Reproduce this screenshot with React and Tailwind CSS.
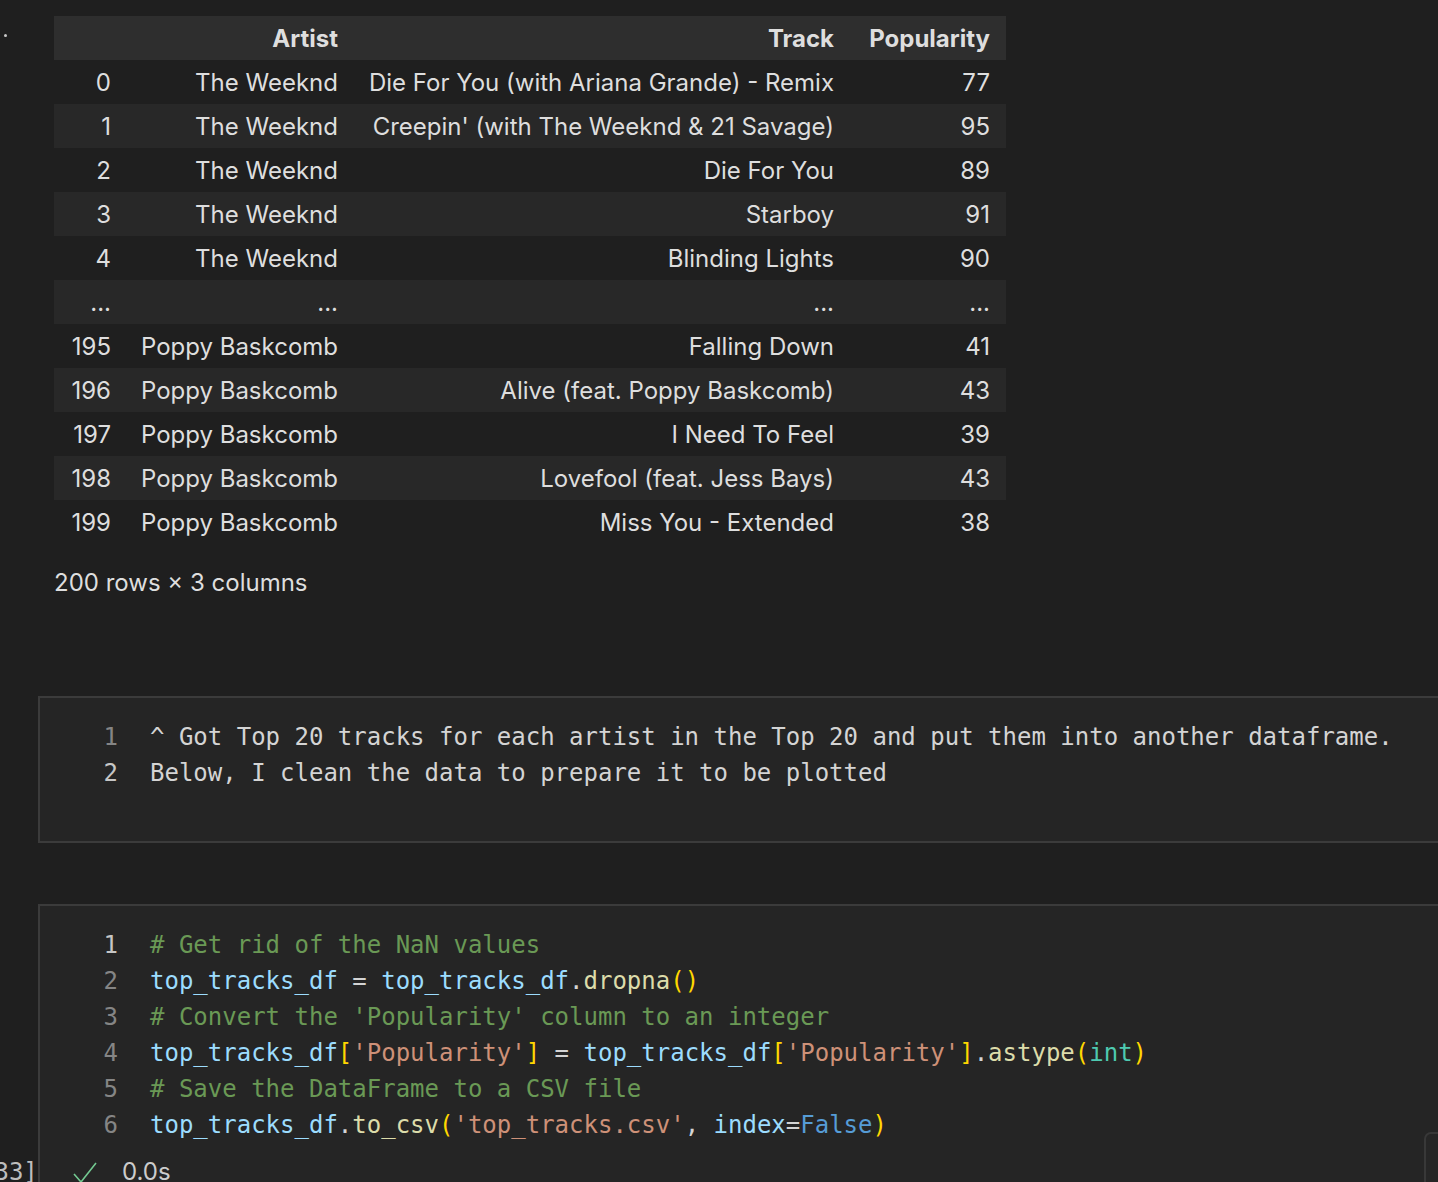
import React from "react";

const rows = [
  ["0", "The Weeknd", "Die For You (with Ariana Grande) - Remix", "77"],
  ["1", "The Weeknd", "Creepin' (with The Weeknd & 21 Savage)", "95"],
  ["2", "The Weeknd", "Die For You", "89"],
  ["3", "The Weeknd", "Starboy", "91"],
  ["4", "The Weeknd", "Blinding Lights", "90"],
  ["...", "...", "...", "..."],
  ["195", "Poppy Baskcomb", "Falling Down", "41"],
  ["196", "Poppy Baskcomb", "Alive (feat. Poppy Baskcomb)", "43"],
  ["197", "Poppy Baskcomb", "I Need To Feel", "39"],
  ["198", "Poppy Baskcomb", "Lovefool (feat. Jess Bays)", "43"],
  ["199", "Poppy Baskcomb", "Miss You - Extended", "38"],
];

const V = "text-[#9cdcfe]";
const F = "text-[#dcdcaa]";
const S = "text-[#ce9178]";
const B = "text-[#ffd700]";
const C = "text-[#6a9955]";
const P = "text-[#d4d4d4]";

const codeLines = [
  [[C, "# Get rid of the NaN values"]],
  [[V, "top_tracks_df"], [P, " = "], [V, "top_tracks_df"], [P, "."], [F, "dropna"], [B, "()"]],
  [[C, "# Convert the 'Popularity' column to an integer"]],
  [
    [V, "top_tracks_df"], [B, "["], [S, "'Popularity'"], [B, "]"], [P, " = "],
    [V, "top_tracks_df"], [B, "["], [S, "'Popularity'"], [B, "]"], [P, "."],
    [F, "astype"], [B, "("], ["text-[#4ec9b0]", "int"], [B, ")"],
  ],
  [[C, "# Save the DataFrame to a CSV file"]],
  [
    [V, "top_tracks_df"], [P, "."], [F, "to_csv"], [B, "("], [S, "'top_tracks.csv'"],
    [P, ", "], [V, "index"], [P, "="], ["text-[#569cd6]", "False"], [B, ")"],
  ],
];

const mono = "font-['DejaVu_Sans_Mono',monospace] text-[24px] leading-[36px] whitespace-pre";

function Gutter({ n, active }) {
  return (
    <span className={`w-[78px] shrink-0 text-right ${active ? "text-[#c6c6c6]" : "text-[#858585]"}`}>
      {n}
    </span>
  );
}

function DataTable() {
  const cols = "grid grid-cols-[74px_226px_496px_156px]";
  return (
    <div className="ml-[54px] mt-[16px] w-[952px] text-[24px] text-[#dedede]">
      <div className={`${cols} h-[44px] items-center bg-[#2e2e2e] font-bold pt-[2px]`}>
        <span />
        <span className="text-right pr-[16px]">Artist</span>
        <span className="text-right pr-[16px]">Track</span>
        <span className="text-right pr-[16px]">Popularity</span>
      </div>
      {rows.map((r, i) => (
        <div
          key={i}
          className={`${cols} h-[44px] items-center pt-[2px] ${i % 2 === 1 ? "bg-[#282828]" : ""}`}
        >
          <span className="text-right pr-[17px]">{r[0]}</span>
          <span className="text-right pr-[16px]">{r[1]}</span>
          <span className="text-right pr-[16px] whitespace-nowrap">{r[2]}</span>
          <span className="text-right pr-[16px]">{r[3]}</span>
        </div>
      ))}
    </div>
  );
}

export default function App() {
  return (
    <div className="relative h-[1182px] w-[1438px] overflow-hidden bg-[#1f1f1f] font-['Inter','Liberation_Sans',sans-serif]">
      <span className="absolute left-[4px] top-[34px] h-[3px] w-[3px] rounded-full bg-[#c8c8c8]" />

      <DataTable />

      <div className="ml-[54px] mt-[24px] text-[24px] leading-[30px] text-[#dedede]">
        200 rows × 3 columns
      </div>

      {/* markdown cell */}
      <div className="ml-[38px] mt-[98px] w-[1420px] border-2 border-[#3b3b3b] bg-[#252525] pt-[21px] pb-[50px]">
        <div className={`flex ${mono} text-[#d4d4d4]`}>
          <Gutter n="1" />
          <span className="ml-[32px]">^ Got Top 20 tracks for each artist in the Top 20 and put them into another dataframe.</span>
        </div>
        <div className={`flex ${mono} text-[#d4d4d4]`}>
          <Gutter n="2" active />
          <span className="ml-[32px]">Below, I clean the data to prepare it to be plotted</span>
        </div>
      </div>

      {/* code cell */}
      <div className="relative ml-[38px] mt-[61px] w-[1420px] h-[320px] border-2 border-[#3b3b3b] bg-[#252525] pt-[21px]">
        {codeLines.map((line, i) => (
          <div key={i} className={`flex ${mono}`}>
            <Gutter n={i + 1} active={i === 0} />
            <span className="ml-[32px]">
              {line.map(([cls, t], j) => (
                <span key={j} className={cls}>{t}</span>
              ))}
            </span>
          </div>
        ))}
        <div className="mt-[11px] flex h-[36px] items-center text-[24px] text-[#cccccc]">
          <svg className="ml-[32px] h-[26px] w-[26px]" viewBox="0 0 26 26" fill="none">
            <path d="M2 15 L9 23 L24 4" stroke="#73c991" strokeWidth="1.6" />
          </svg>
          <span className="ml-[24px]">0.0s</span>
        </div>
      </div>

      <span className="absolute left-[-20px] top-[1156px] text-[24px] leading-[32px] text-[#bdbdbd] font-['DejaVu_Sans_Mono',monospace]">[33]</span>

      <div className="absolute left-[1424px] top-[1132px] h-[80px] w-[40px] rounded-[7px] border-2 border-[#383838] bg-[#262626]" />
    </div>
  );
}
